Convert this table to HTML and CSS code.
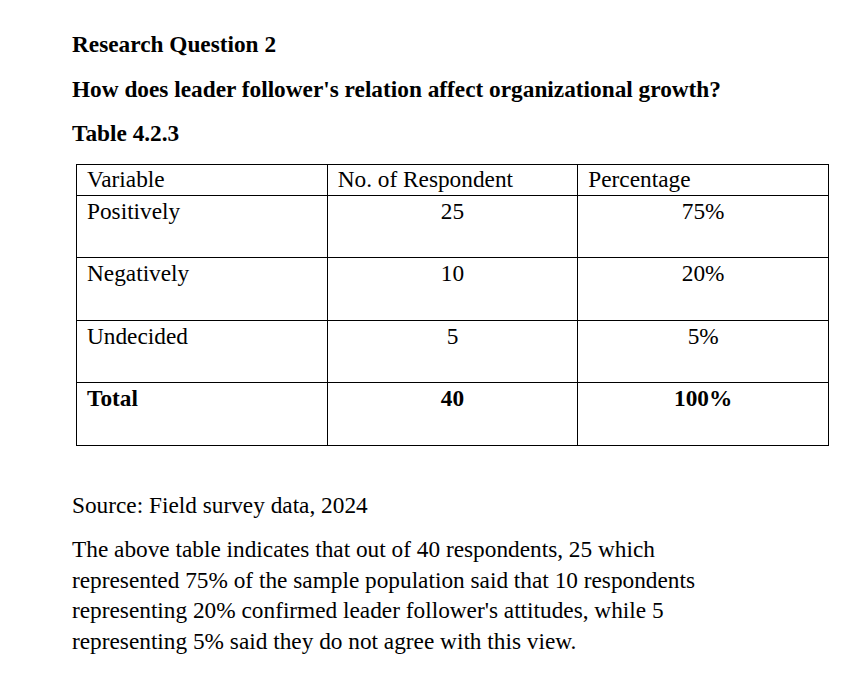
FILE: index.html
```html
<!DOCTYPE html>
<html lang="en">
<head>
<meta charset="utf-8">
<title>Research Question 2</title>
<link rel="stylesheet" href="styles.css">
</head>
<body>
<main class="page">
  <p class="heading">Research Question 2</p>
  <p class="heading">How does leader follower's relation affect organizational growth?</p>
  <p class="heading heading-last">Table 4.2.3</p>
  <table class="data-table">
    <tr class="head-row">
      <td>Variable</td>
      <td>No. of Respondent</td>
      <td>Percentage</td>
    </tr>
    <tr class="row">
      <td>Positively</td>
      <td class="num">25</td>
      <td class="num">75%</td>
    </tr>
    <tr class="row">
      <td>Negatively</td>
      <td class="num">10</td>
      <td class="num">20%</td>
    </tr>
    <tr class="row">
      <td>Undecided</td>
      <td class="num">5</td>
      <td class="num">5%</td>
    </tr>
    <tr class="row total">
      <td>Total</td>
      <td class="num">40</td>
      <td class="num">100%</td>
    </tr>
  </table>
  <p class="source">Source: Field survey data, 2024</p>
  <p class="body-text">The above table indicates that out of 40 respondents, 25 which represented 75% of the sample population said that 10 respondents representing 20% confirmed leader follower's attitudes, while 5 representing 5% said they do not agree with this view.</p>
</main>
</body>
</html>
```

FILE: styles.css
```css
html, body {
  margin: 0;
  padding: 0;
  background: #ffffff;
}

body {
  font-family: "Liberation Serif", "Times New Roman", serif;
  font-size: 23.3px;
  color: #000000;
}

.page {
  padding: 29px 0 0 72px;
  width: 760px;
}

.heading {
  margin: 0 0 14.5px 0;
  font-weight: bold;
  line-height: 30px;
}

.heading-last {
  margin-bottom: 16px;
}

.data-table {
  border-collapse: collapse;
  margin-left: 4px;
  width: 753px;
  table-layout: fixed;
}

.data-table td {
  border: 1px solid #000000;
  padding: 1px 10px 0 10px;
  line-height: 28px;
  vertical-align: top;
  width: 33.33%;
}

.head-row td {
  height: 29.5px;
  padding-top: 0;
}

.row td {
  height: 60.6px;
}

.num {
  text-align: center;
}

.total td {
  font-weight: bold;
}

.source {
  margin: 44px 0 0 0;
  line-height: 30px;
}

.body-text {
  margin: 14.5px 0 0 0;
  line-height: 30.5px;
  width: 650px;
}
```
